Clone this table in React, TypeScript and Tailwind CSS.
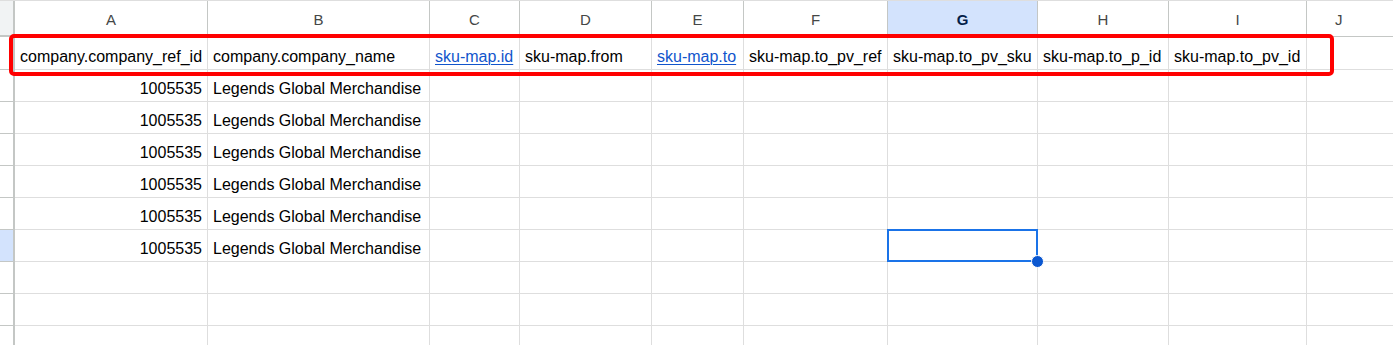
import React from "react";

const widths = [193, 222, 90, 132, 92, 144, 150, 131, 138];
const letters = ["A", "B", "C", "D", "E", "F", "G", "H", "I", "J"];

type Cell = { t: string; link?: boolean; right?: boolean };

const headerRow: Cell[] = [
  { t: "company.company_ref_id" },
  { t: "company.company_name" },
  { t: "sku-map.id", link: true },
  { t: "sku-map.from" },
  { t: "sku-map.to", link: true },
  { t: "sku-map.to_pv_ref" },
  { t: "sku-map.to_pv_sku" },
  { t: "sku-map.to_p_id" },
  { t: "sku-map.to_pv_id" },
];

const dataRow: Cell[] = [
  { t: "1005535", right: true },
  { t: "Legends Global Merchandise" },
];

function Row({ cells, h, selected }: { cells: Cell[]; h: string; selected?: boolean }) {
  return (
    <div className={`flex ${h}`}>
      <div
        className={`w-[15px] shrink-0 border-r-2 border-b border-[#c4c7c5] ${selected ? "bg-[#d3e3fd]" : "bg-white"}`}
      />
      {widths.map((w, i) => {
        const c = cells[i];
        return (
          <div
            key={i}
            style={{ width: w }}
            className={`shrink-0 border-r border-b border-[#dedede] flex items-end pb-[3px] px-[5px] overflow-hidden whitespace-nowrap ${
              c?.right ? "justify-end" : "justify-start"
            }`}
          >
            {c ? (
              <span
                className={`leading-[18px] ${c.link ? "text-[#1155cc] underline decoration-1 underline-offset-2" : "text-black"}`}
              >
                {c.t}
              </span>
            ) : null}
          </div>
        );
      })}
      <div className="flex-1 border-b border-[#dedede]" />
    </div>
  );
}

export default function App() {
  const rows: { cells: Cell[]; selected?: boolean }[] = [
    { cells: dataRow },
    { cells: dataRow },
    { cells: dataRow },
    { cells: dataRow },
    { cells: dataRow },
    { cells: dataRow, selected: true },
    { cells: [] },
    { cells: [] },
    { cells: [] },
    { cells: [] },
  ];
  return (
    <div
      className="relative w-[1393px] h-[345px] overflow-hidden bg-white text-[16px]"
      style={{ fontFamily: '"Liberation Sans", Arial, sans-serif' }}
    >
      {/* column header */}
      <div className="flex h-[37px] border-t border-[#dedede]">
        <div className="w-[15px] shrink-0 bg-[#f1f3f4] border-r-2 border-b-2 border-[#c4c7c5]" />
        {letters.map((l, i) => {
          const sel = l === "G";
          const w = widths[i];
          return (
            <div
              key={l}
              style={w ? { width: w } : undefined}
              className={`${w ? "shrink-0 border-r justify-center" : "flex-1 justify-start pl-[28px]"} border-b border-[#c4c7c5] flex items-center pt-[3px] text-[15px] ${
                sel ? "bg-[#d3e3fd] text-[#041e49] font-bold" : "bg-white text-[#444746]"
              }`}
            >
              <span>{l}</span>
            </div>
          );
        })}
      </div>
      <Row cells={headerRow} h="h-[33px]" />
      {rows.map((r, i) => (
        <Row key={i} cells={r.cells} h="h-[32px]" selected={r.selected} />
      ))}

      {/* red highlight box */}
      <div className="absolute left-[9px] top-[34px] w-[1325px] h-[42px] border-4 border-[#ff0000] rounded-[5px] pointer-events-none" />

      {/* selected cell */}
      <div className="absolute left-[887px] top-[229px] w-[151px] h-[33px] border-2 border-[#1a73e8] pointer-events-none" />
      <div className="absolute left-[1031px] top-[255px] w-[13px] h-[13px] rounded-full bg-[#0b57d0] border border-white" />
    </div>
  );
}
